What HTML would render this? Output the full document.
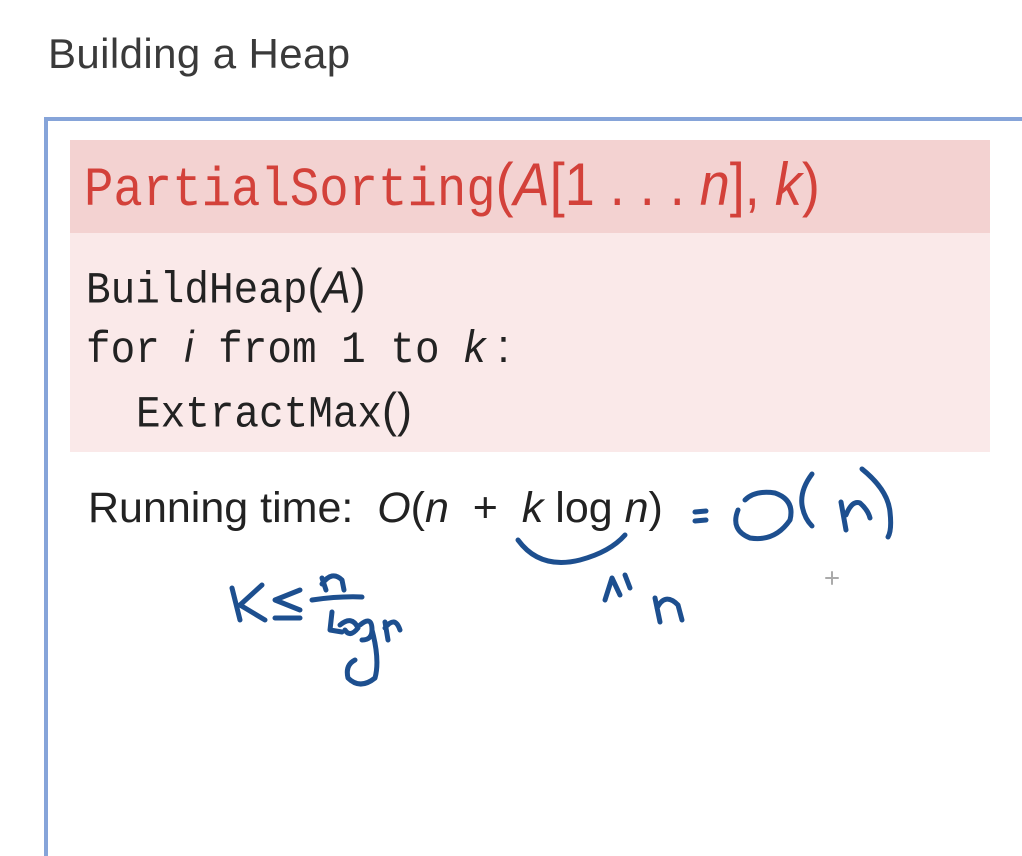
<!DOCTYPE html>
<html><head><meta charset="utf-8"><style>
html,body{margin:0;padding:0;background:#fff;width:1022px;height:856px;overflow:hidden;position:relative}
.t{position:absolute;left:48px;top:30px;font:42px "Liberation Sans",sans-serif;color:#3a3a3a;letter-spacing:0.4px}
.box{position:absolute;left:44px;top:117px;width:990px;height:760px;border-left:4px solid #86a4d9;border-top:4px solid #86a4d9}
.hd{position:absolute;left:70px;top:140px;width:920px;height:93px;background:#f3d2d1}
.bd{position:absolute;left:70px;top:233px;width:920px;height:219px;background:#fae9e9}
.m{position:absolute;font-family:"Liberation Mono",monospace;white-space:pre;transform-origin:left top}
.s{font-family:"Liberation Sans",sans-serif}
.si{font-family:"Liberation Sans",sans-serif;font-style:italic}
</style></head><body>
<div class="t">Building a Heap</div>
<div class="box"></div>
<div class="hd"></div>
<div class="bd"></div>
<div class="m" style="left:84px;top:150px;font-size:49px;color:#d3413a;transform:scaleY(1.12)">PartialSorting<span class="s" style="font-size:54px">(</span><span class="si" style="font-size:54px">A</span><span class="s" style="font-size:54px">[1 . . . </span><span class="si" style="font-size:54px">n</span><span class="s" style="font-size:54px">], </span><span class="si" style="font-size:54px">k</span><span class="s" style="font-size:54px">)</span></div>
<div class="m" style="left:86px;top:258px;font-size:41px;color:#222;transform:scaleY(1.08)">BuildHeap<span class="s" style="font-size:45px">(</span><span class="si" style="font-size:42px">A</span><span class="s" style="font-size:45px">)</span></div>
<div class="m" style="left:86px;top:320px;font-size:41px;color:#222;transform:scaleY(1.08)">for <span class="si" style="font-size:41px">i</span> from 1 to <span class="si" style="font-size:42px">k</span><span class="s" style="font-size:44px"> :</span></div>
<div class="m" style="left:136px;top:382px;font-size:41px;color:#222;transform:scaleY(1.08)">ExtractMax<span class="s" style="font-size:45px">()</span></div>
<div class="s" style="position:absolute;left:88px;top:484px;font-size:43px;color:#222;white-space:pre">Running time:  <i>O</i>(<i>n</i>  +  <i>k</i> log <i>n</i>)</div>
<svg width="1022" height="856" style="position:absolute;left:0;top:0" fill="none" stroke="#1d4f8f" stroke-width="5" stroke-linecap="round" stroke-linejoin="round">
<path d="M518 540 Q540 570 580 560 Q610 552 625 535"/>
<path d="M695 512 L706 511 M695 521 L706 520"/>
<path d="M738 510 Q730 530 750 538 Q775 542 790 520 Q795 500 775 493 Q755 490 745 500"/>
<path d="M812 474 Q800 490 802 505 Q804 518 812 526"/>
<path d="M841 502 L846 530 M846 515 Q852 500 860 503 Q868 510 870 518"/>
<path d="M862 469 Q888 490 890 512 Q892 530 888 537"/>
<path d="M232 588 L240 620 M262 585 L240 605 L265 620"/>
<path d="M300 590 L275 600 L300 610 M275 618 L300 618"/>
<path d="M312 600 Q340 596 362 597"/>
<path d="M322 578 L326 590 M322 584 Q332 570 342 580 L344 590"/>
<path d="M332 612 L330 630 L342 632 M340 625 Q352 615 358 628 Q350 638 345 630 M360 625 Q372 615 372 630 Q372 640 362 640 M372 630 Q380 660 375 678 Q360 690 348 678 Q345 665 355 660 M385 622 L388 640 M385 628 Q395 615 400 630"/>
<path d="M612 578 L605 600 M612 578 L620 595 M625 575 L630 588"/>
<path d="M655 598 L660 622 M657 608 Q665 592 678 605 L682 620"/>
<path d="M832 572 L832 584 M826 578 L838 578" stroke="#aaa" stroke-width="2"/>
</svg>
</body></html>
